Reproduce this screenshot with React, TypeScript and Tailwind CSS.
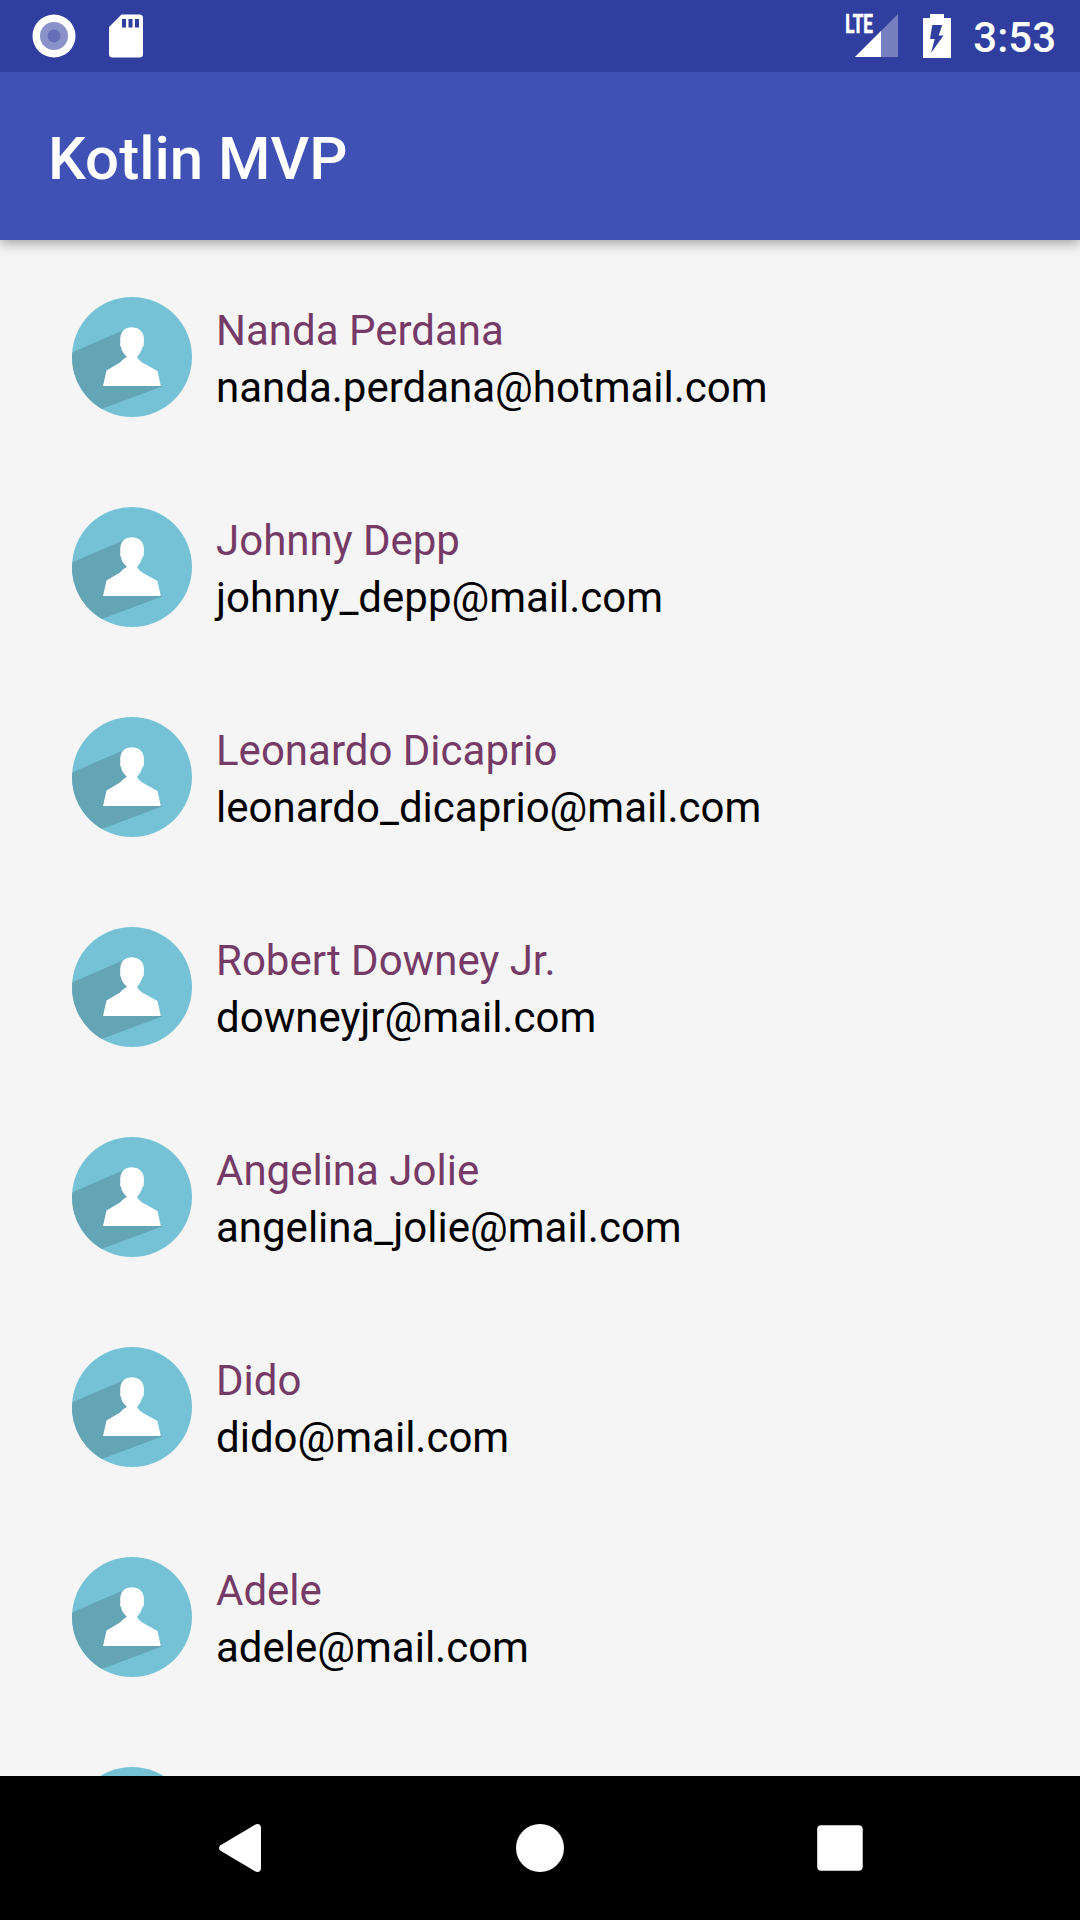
const people = [
  { name: "Nanda Perdana", email: "nanda.perdana@hotmail.com" },
  { name: "Johnny Depp", email: "johnny_depp@mail.com" },
  { name: "Leonardo Dicaprio", email: "leonardo_dicaprio@mail.com" },
  { name: "Robert Downey Jr.", email: "downeyjr@mail.com" },
  { name: "Angelina Jolie", email: "angelina_jolie@mail.com" },
  { name: "Dido", email: "dido@mail.com" },
  { name: "Adele", email: "adele@mail.com" },
  { name: "", email: "" },
];

function Avatar() {
  return (
    <svg className="size-[120px] shrink-0" viewBox="0 0 120 120">
      <defs>
        <clipPath id="disc">
          <circle cx="60" cy="60" r="60" />
        </clipPath>
      </defs>
      <circle cx="60" cy="60" r="60" fill="#75c2d7" />
      <path clipPath="url(#disc)" d="M53 32.500 0 55.500V123L90 89.500 60 60Z" fill="#63a4b5" />
      <path
        d="M59.700 30.300C66 30.300 71.500 34 71.900 41C72.100 44 71.700 45.500 71.900 47C72 48.500 71.300 50 70.500 50C69.500 54.500 67 57.500 65 60C67 63 69.500 65.500 72 66.500L85.500 74 88.800 89H31L34.500 73.500 48 65.500C50 63.500 51.500 61.500 55 59.700C51.500 57 49.500 54 49 50C48.200 49 47.800 47.500 48.200 46.500C48.500 45 48 43 48.300 40.500C49 34 53.500 30.300 59.700 30.300Z"
        fill="#fff"
      />
    </svg>
  );
}

function StatusBar() {
  return (
    <div className="relative z-10 flex h-[72px] items-center justify-between bg-[#303f9f] pr-6 pl-8 text-white">
      <div className="flex items-center gap-8">
        <svg className="size-11" viewBox="0 0 44 44">
          <circle cx="22" cy="22" r="21.500" fill="#fff" />
          <circle cx="22" cy="22" r="14" fill="#8b92c9" />
          <circle cx="22" cy="22" r="6.500" fill="#656eb6" />
        </svg>
        <svg className="h-11 w-9" viewBox="0 0 36 44">
          <path
            fillRule="evenodd"
            fill="#fff"
            d="M13.500 .5H31.500Q35 .5 35 4V40Q35 43.500 31.500 43.500H4.500Q1 43.500 1 40V13ZM14 5V13.500H18V5ZM20.500 5V13.500H24.500V5ZM27 5V13.500H31V5Z"
          />
        </svg>
      </div>
      <div className="flex items-center">
        <svg className="h-11 w-[54px] overflow-visible" viewBox="0 0 54 44">
          <path d="M53 0V43H10Z" fill="#767fbf" />
          <path d="M36 17V43H10Z" fill="#fff" />
          <text
            x="0.300"
            y="19.400"
            fontSize="25.500"
            fontWeight="700"
            textLength="27.500"
            lengthAdjust="spacingAndGlyphs"
            fill="#fff"
            stroke="#fff"
            strokeWidth="0.700"
          >
            LTE
          </text>
        </svg>
        <svg className="ml-6 h-11 w-7" viewBox="0 0 28 44">
          <path fillRule="evenodd" fill="#fff" d="M7 0H21V4H28V44H0V4H7ZM9.300 11 7 25H11.700L8 39 20.500 21.500H15.700L19.200 11Z" />
        </svg>
        <span className="ml-[22px] pt-1 text-[42px] leading-none font-medium">3:53</span>
      </div>
    </div>
  );
}

function NavBar() {
  return (
    <nav className="flex h-36 shrink-0 items-center justify-between bg-black px-[216px]">
      <svg className="size-12" viewBox="0 0 48 48">
        <path d="M4.500 21.200 39 .7C42-1 45 .5 45 4V44C45 47.500 42 49 39 47.300L4.500 26.800Q1.500 24 4.500 21.200Z" fill="#fff" />
      </svg>
      <div className="size-12 rounded-full bg-white" />
      <svg className="size-12" viewBox="0 0 48 48">
        <rect x="1.200" y="1.200" width="45.500" height="45.500" rx="4" fill="#fff" />
      </svg>
    </nav>
  );
}

export default function App() {
  return (
    <div className="flex h-[1920px] w-[1080px] flex-col overflow-hidden bg-[#f5f5f5] font-['Roboto',sans-serif]">
      <StatusBar />
      <header className="relative flex h-[168px] shrink-0 items-center bg-[#3f51b5] px-12 pt-1.5 shadow-[0_3px_12px_rgba(0,0,0,0.36)]">
        <h1 className="text-[60px] leading-none font-medium text-white">Kotlin MVP</h1>
      </header>
      <main className="min-h-0 flex-1 overflow-hidden px-[72px] pt-3">
        {people.map((p, i) => (
          <div key={i} className="flex h-[210px] items-center gap-6">
            <Avatar />
            <div className="pt-1 text-[42px] leading-[57px]">
              <p className="text-[#763a67]">{p.name}</p>
              <p className="text-black">{p.email}</p>
            </div>
          </div>
        ))}
      </main>
      <NavBar />
    </div>
  );
}
